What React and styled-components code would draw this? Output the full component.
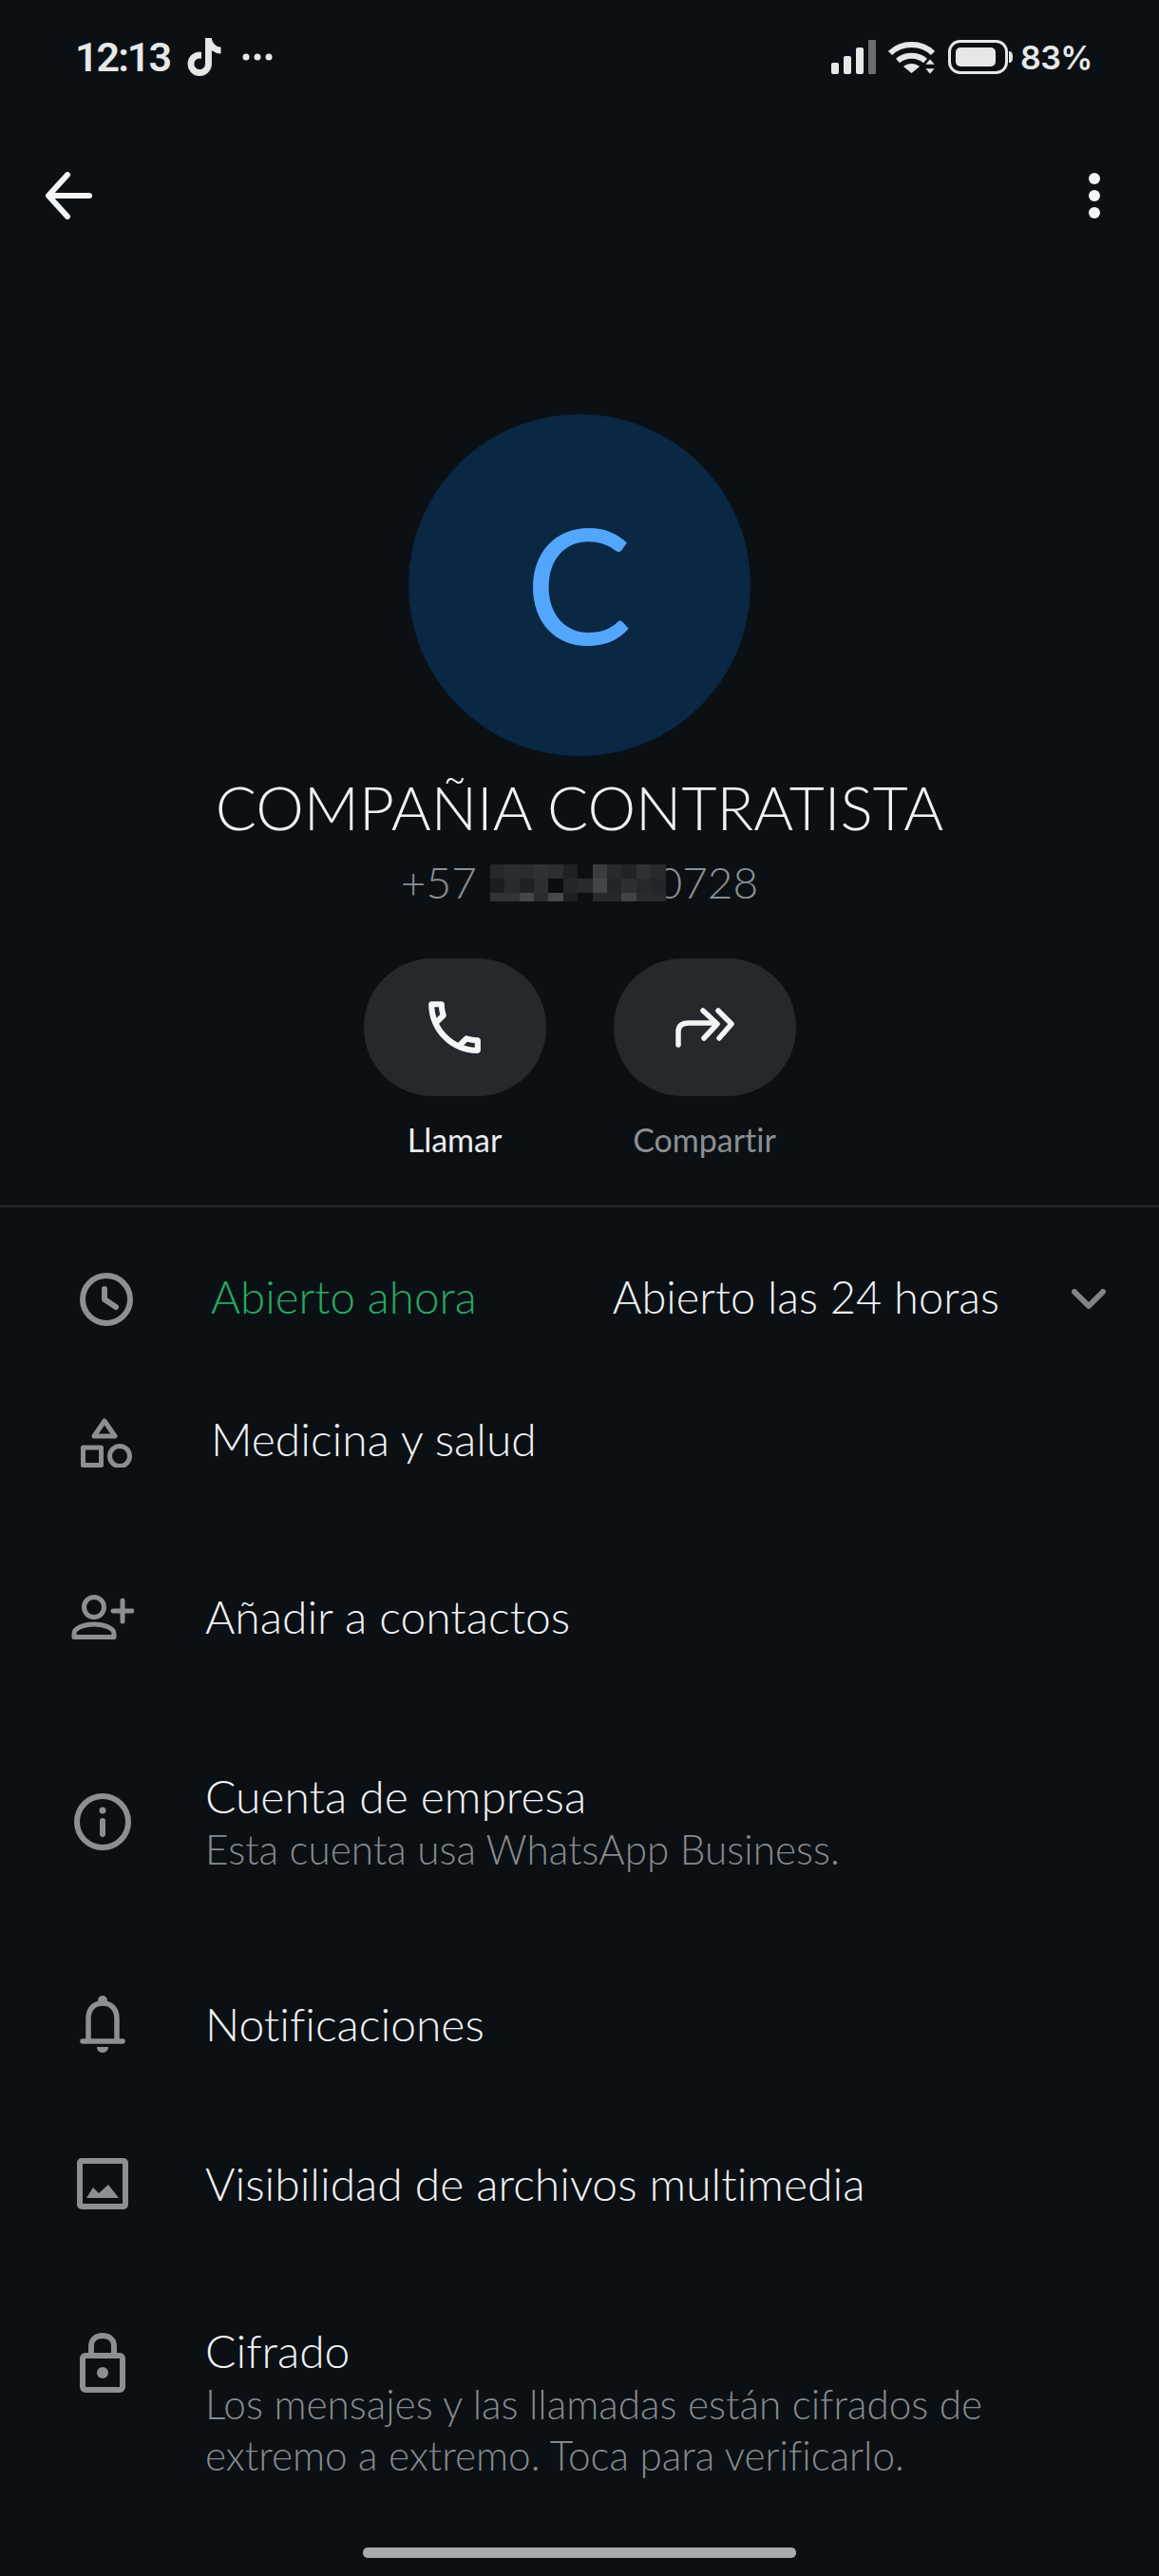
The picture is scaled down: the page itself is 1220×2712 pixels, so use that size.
import React from 'react';
import styled, { createGlobalStyle } from 'styled-components';
import { FaTiktok } from 'react-icons/fa6';

const GlobalStyle = createGlobalStyle`
  html, body {
    margin: 0;
    padding: 0;
    background: #0b1014;
  }
  * {
    box-sizing: border-box;
  }
`;

const Page = styled.div`
  width: 1220px;
  height: 2712px;
  overflow: hidden;
  background: #0b1014;
  color: #f0f2f3;
  font-family: Lato, "Open Sans", sans-serif;
  font-weight: 300;
  font-variant-ligatures: none;
`;

const StatusBar = styled.div`
  height: 120px;
  padding: 0 70px 0 79px;
  display: flex;
  align-items: center;
  justify-content: space-between;
  font-family: Roboto, sans-serif;
  font-weight: 600;
  color: #e6e8e8;
`;

const StatusGroup = styled.div`
  display: flex;
  align-items: center;
  gap: ${(p) => p.$gap || 0}px;
`;

const Clock = styled.span`
  font-size: 43px;
  letter-spacing: -2px;
`;

const Percent = styled.span`
  margin-left: -5px;
  font-family: Inter, sans-serif;
  font-size: 34px;
  letter-spacing: -0.5px;
`;

const TopBar = styled.div`
  height: 172px;
  padding: 0 62px 0 48px;
  display: flex;
  align-items: center;
  justify-content: space-between;
`;

const Hero = styled.section`
  padding-top: 144px;
  display: flex;
  flex-direction: column;
  align-items: center;
`;

const Avatar = styled.div`
  width: 360px;
  height: 360px;
  padding: 0 2px 5px 0;
  border-radius: 50%;
  background: #0a2744;
  color: #53a6fd;
  font-size: 168px;
  font-weight: 400;
  display: flex;
  align-items: center;
  justify-content: center;
`;

const Name = styled.h1`
  margin: 16px 0 0;
  font-size: 64px;
  line-height: 76px;
  font-weight: 300;
  white-space: nowrap;
`;

const Phone = styled.div`
  margin-top: 12px;
  font-size: 46px;
  line-height: 58px;
  color: #8a8f93;
  display: flex;
  align-items: center;
`;

const Mosaic = styled.div`
  position: relative;
  z-index: 1;
  margin: 0 -9px 0 14px;
  display: grid;
  grid-template-columns: repeat(12, 15.4px);
  grid-template-rows: 15px 15px 9px;
`;

const MosaicCell = styled.span`
  background: ${(p) => p.$color};
`;

const Actions = styled.div`
  margin-top: 51px;
  display: flex;
  gap: 71px;
`;

const Action = styled.div`
  width: 192px;
  display: flex;
  flex-direction: column;
  align-items: center;
`;

const ActionButton = styled.div`
  width: 192px;
  height: 145px;
  border-radius: 72px;
  background: #24292d;
  display: flex;
  align-items: center;
  justify-content: center;
`;

const ActionLabel = styled.span`
  margin-top: 26px;
  font-size: 34px;
  line-height: 40px;
  font-weight: 400;
  white-space: nowrap;
  color: ${(p) => (p.$muted ? '#8a8f93' : '#e9edef')};
`;

const Divider = styled.div`
  margin-top: 49px;
  height: 2px;
  background: #24292d;
`;

const List = styled.div`
  display: flex;
  flex-direction: column;
`;

const Row = styled.div`
  margin-top: ${(p) => p.$top}px;
  min-height: 100px;
  padding-left: ${(p) => (p.$wide ? 74 : 70)}px;
  display: grid;
  grid-template-columns: ${(p) => (p.$wide ? 148 : 146)}px 1fr;
  align-items: center;
`;

const IconSlot = styled.div`
  width: 76px;
  padding-top: ${(p) => p.$drop || 0}px;
  align-self: ${(p) => (p.$pinned ? 'start' : 'center')};
  display: flex;
  justify-content: center;
`;

const Title = styled.div`
  font-size: 48px;
  line-height: 58px;
  white-space: nowrap;
  color: ${(p) => p.$color || '#f0f2f3'};
`;

const Sub = styled.div`
  font-size: 42.3px;
  line-height: 54px;
  white-space: nowrap;
  color: #858a8e;
`;

const Hours = styled.div`
  display: flex;
  align-items: center;
`;

const HoursOpen = styled(Title)`
  font-size: 47.5px;
`;

const HoursValue = styled(Title)`
  margin-left: 143px;
  font-size: 47px;
`;

const Chevron = styled.svg`
  margin: 6px 0 0 76px;
`;

const HomeBar = styled.div`
  width: 456px;
  height: 11px;
  margin: 70px auto 0;
  border-radius: 5px;
  background: #a8abac;
`;

const Dots = styled.svg`
  margin-left: 4px;
`;

const mosaic = [
  ['#24282c', '#2a2e31', '#282c2f', '#2e3235', '#2a2e31', '#1e2225', '#0b1014', '#3a3e42', '#262a2d', '#202427', '#2e3235', '#26292c'],
  ['#1a1e21', '#282c2f', '#1e2225', '#2c3033', '#0b0e11', '#24282b', '#272b2e', '#40464a', '#22262a', '#2c3033', '#26292c', '#232629'],
  ['#303437', '#303437', '#44484b', '#282c2f', '#45494c', '#1c2023', '#0b1014', '#26292c', '#25282b', '#404447', '#282b2e', '#282b2e'],
];

const GREY = '#8a9094';

const BackIcon = () => (
  <svg width="50" height="50" viewBox="0 0 50 50" fill="none" stroke="#f4f5f5" strokeWidth="6" strokeLinecap="round" strokeLinejoin="round">
    <path d="M4 25H46M23 3 3 25l20 22" />
  </svg>
);

const MoreIcon = () => (
  <svg width="12" height="48" viewBox="0 0 12 48" fill="#f4f5f5">
    <circle cx="6" cy="6" r="6" />
    <circle cx="6" cy="24" r="6" />
    <circle cx="6" cy="42" r="6" />
  </svg>
);

const SignalIcon = () => (
  <svg width="47" height="36" viewBox="0 0 47 36" fill="#e6e8e8">
    <rect x="0" y="24" width="8" height="12" rx="2" />
    <rect x="13" y="17" width="8" height="19" rx="2" />
    <rect x="26" y="8" width="8" height="28" rx="2" />
    <rect x="39" y="0" width="8" height="36" rx="1" fill="#6a6e70" />
  </svg>
);

const WifiIcon = () => (
  <svg width="50" height="35" viewBox="0 0 50 35">
    <g fill="none" stroke="#e6e8e8" strokeWidth="6">
      <path d="M2 13C14 1 35 1 47 13" />
      <path d="M10 21c8-7 21-7 29 0" />
    </g>
    <path d="M16 27c5-4 12-4 17 0l-8.500 7z" fill="#e6e8e8" />
    <path d="M44 19l5 6H39zM44 35l-5-6H49z" fill="#e6e8e8" stroke="#0b1014" strokeWidth="0.500" />
  </svg>
);

const BatteryIcon = () => (
  <svg width="68" height="36" viewBox="0 0 68 36">
    <rect x="1.500" y="1.500" width="60" height="33" rx="11" fill="none" stroke="#e6e8e8" strokeWidth="3" />
    <rect x="8" y="8" width="42" height="20" rx="5" fill="#e6e8e8" />
    <path d="M64 12c3 0 4 2 4 6s-1 6-4 6z" fill="#e6e8e8" />
  </svg>
);

const DotsIcon = () => (
  <Dots width="32" height="8" viewBox="0 0 32 8" fill="#e6e8e8">
    <circle cx="4" cy="4" r="3.500" />
    <circle cx="16" cy="4" r="3.500" />
    <circle cx="28" cy="4" r="3.500" />
  </Dots>
);

const CallIcon = () => (
  <svg width="73" height="73" viewBox="0 0 24 24" fill="#f4f5f5">
    <path d="M6.540 5c.06.89.21 1.760.45 2.590l-1.200 1.200c-.41-1.200-.67-2.470-.76-3.790h1.510m9.860 12.020c.85.24 1.720.39 2.600.45v1.490c-1.320-.09-2.590-.35-3.800-.75l1.200-1.190M7.500 3H4c-.55 0-1 .45-1 1 0 9.390 7.610 17 17 17 .55 0 1-.45 1-1v-3.490c0-.55-.45-1-1-1-1.240 0-2.450-.2-3.570-.57-.1-.04-.21-.05-.31-.05-.26 0-.51.1-.71.29l-2.200 2.200c-2.830-1.450-5.150-3.760-6.590-6.590l2.200-2.200c.28-.28.36-.67.25-1.020C8.700 6.450 8.500 5.250 8.500 4c0-.55-.45-1-1-1z" />
  </svg>
);

const ForwardIcon = () => (
  <svg width="62" height="42" viewBox="0 0 62 42" fill="none" stroke="#f4f5f5" strokeWidth="5.500" strokeLinecap="round" strokeLinejoin="round">
    <path d="M3 39V25C3 18 8 16 14 16H42" />
    <path d="M29 3 44 17 30 32" />
    <path d="M45 3 59 17 46 32" />
  </svg>
);

const ClockIcon = () => (
  <svg width="56" height="56" viewBox="0 0 56 56" fill="none" stroke={GREY} strokeWidth="6" strokeLinecap="round" strokeLinejoin="round">
    <circle cx="28" cy="28" r="25" />
    <path d="M26 17V28L38 36" />
  </svg>
);

const ShapesIcon = () => (
  <svg width="54" height="52" viewBox="0 0 54 52" fill="none" stroke={GREY} strokeWidth="5" strokeLinejoin="round">
    <path d="M25 3 36 19H14z" />
    <rect x="2.500" y="31" width="19" height="18.500" />
    <circle cx="41" cy="40" r="10.500" />
  </svg>
);

const AddPersonIcon = () => (
  <svg width="66" height="47" viewBox="0 0 66 47" fill="none" stroke={GREY} strokeWidth="5" strokeLinecap="round" strokeLinejoin="round">
    <circle cx="24" cy="13" r="10.500" />
    <path d="M3 44.500V41c0-6 10-10 21-10s21 4 21 10v3.500z" />
    <path d="M54 6V28M44 17H64" />
  </svg>
);

const InfoIcon = () => (
  <svg width="60" height="60" viewBox="0 0 60 60" fill="none" stroke={GREY} strokeWidth="6" strokeLinecap="round">
    <circle cx="30" cy="30" r="27" />
    <path d="M30 29V43" />
    <circle cx="30" cy="18" r="3.500" fill={GREY} stroke="none" />
  </svg>
);

const BellIcon = () => (
  <svg width="48" height="60" viewBox="0 0 48 60" fill="none" stroke={GREY} strokeWidth="5.500" strokeLinecap="round">
    <path d="M9 47V24C9 14 15 8 24 8s15 6 15 16V47" />
    <path d="M3 48H45" />
    <circle cx="24" cy="5" r="5" fill={GREY} stroke="none" />
    <path d="M18 54H30C30 58 27 60 24 60S18 58 18 54z" fill={GREY} stroke="none" />
  </svg>
);

const ImageIcon = () => (
  <svg width="54" height="54" viewBox="0 0 54 54" fill="none">
    <rect x="3" y="3" width="48" height="48" rx="2" stroke={GREY} strokeWidth="6" />
    <path d="M10 42 17 31 23 37 33 28 44 42z" fill={GREY} />
  </svg>
);

const LockIcon = () => (
  <svg width="48" height="63" viewBox="0 0 48 63" fill="none" stroke={GREY} strokeWidth="6">
    <path d="M12 23V14C12 7 17 3 24 3s12 4 12 11V23" />
    <rect x="3" y="24" width="42" height="36" rx="3" />
    <circle cx="24" cy="42" r="6" fill={GREY} stroke="none" />
  </svg>
);

export default function App() {
  return (
    <Page>
      <GlobalStyle />
      <StatusBar>
        <StatusGroup $gap={16}>
          <Clock>12:13</Clock>
          <FaTiktok size={40} />
          <DotsIcon />
        </StatusGroup>
        <StatusGroup $gap={13}>
          <SignalIcon />
          <WifiIcon />
          <BatteryIcon />
          <Percent>83%</Percent>
        </StatusGroup>
      </StatusBar>

      <TopBar>
        <BackIcon />
        <MoreIcon />
      </TopBar>

      <Hero>
        <Avatar>C</Avatar>
        <Name>COMPAÑIA CONTRATISTA</Name>
        <Phone>
          <span>+57</span>
          <Mosaic>
            {mosaic.flat().map((color, i) => (
              <MosaicCell key={i} $color={color} />
            ))}
          </Mosaic>
          <span>0728</span>
        </Phone>
        <Actions>
          <Action>
            <ActionButton>
              <CallIcon />
            </ActionButton>
            <ActionLabel>Llamar</ActionLabel>
          </Action>
          <Action>
            <ActionButton>
              <ForwardIcon />
            </ActionButton>
            <ActionLabel $muted>Compartir</ActionLabel>
          </Action>
        </Actions>
      </Hero>

      <Divider />

      <List>
        <Row $top={44} $wide>
          <IconSlot $drop={6}><ClockIcon /></IconSlot>
          <Hours>
            <HoursOpen $color="#27a862">Abierto ahora</HoursOpen>
            <HoursValue>Abierto las 24 horas</HoursValue>
            <Chevron width="36" height="22" viewBox="0 0 36 22" fill="none" stroke="#7f8589" strokeWidth="6" strokeLinecap="round" strokeLinejoin="round">
              <path d="M3 3 18 18 33 3" />
            </Chevron>
          </Hours>
        </Row>
        <Row $top={50} $wide>
          <IconSlot $drop={8}><ShapesIcon /></IconSlot>
          <Title>Medicina y salud</Title>
        </Row>
        <Row $top={87}>
          <IconSlot><AddPersonIcon /></IconSlot>
          <Title>Añadir a contactos</Title>
        </Row>
        <Row $top={110}>
          <IconSlot><InfoIcon /></IconSlot>
          <div>
            <Title>Cuenta de empresa</Title>
            <Sub>Esta cuenta usa WhatsApp Business.</Sub>
          </div>
        </Row>
        <Row $top={107}>
          <IconSlot><BellIcon /></IconSlot>
          <Title>Notificaciones</Title>
        </Row>
        <Row $top={68}>
          <IconSlot><ImageIcon /></IconSlot>
          <Title>Visibilidad de archivos multimedia</Title>
        </Row>
        <Row $top={97}>
          <IconSlot $pinned $drop={10}><LockIcon /></IconSlot>
          <div>
            <Title>Cifrado</Title>
            <Sub>Los mensajes y las llamadas están cifrados de</Sub>
            <Sub>extremo a extremo. Toca para verificarlo.</Sub>
          </div>
        </Row>
      </List>

      <HomeBar />
    </Page>
  );
}
